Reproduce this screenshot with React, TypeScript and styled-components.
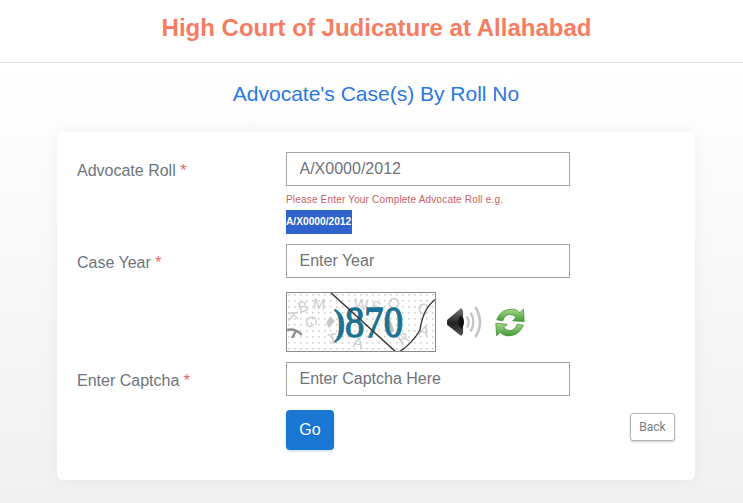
import styled, { createGlobalStyle } from 'styled-components';

const GlobalStyle = createGlobalStyle`
  html, body {
    margin: 0;
    padding: 0;
    height: 100%;
    overflow: hidden;
  }
  body {
    font-family: "Liberation Sans", Arial, sans-serif;
    background: #fff;
  }
`;

const Page = styled.div`
  width: 743px;
  height: 503px;
  overflow: hidden;
  background: linear-gradient(180deg, #ffffff 63px, #f1f1f1 100%);
`;

const Header = styled.header`
  height: 62px;
  padding-left: 10px;
  box-sizing: content-box;
  background: #fff;
  border-bottom: 1px solid #e4e4e4;
  display: flex;
  align-items: center;
  justify-content: center;
`;

const CourtName = styled.h1`
  margin: 0 0 6px;
  font-size: 24px;
  font-weight: 700;
  color: #f67d62;
`;

const PageTitle = styled.h2`
  margin: 0;
  height: 69px;
  padding-left: 9px;
  line-height: 62px;
  text-align: center;
  font-size: 21px;
  font-weight: 400;
  color: #2a78e4;
`;

const Card = styled.main`
  box-sizing: border-box;
  width: 638px;
  height: 348px;
  margin-left: 57px;
  padding: 20px 20px 0;
  background: #fff;
  border-radius: 6px;
  box-shadow: 0 0 20px rgba(0, 0, 0, 0.05);
`;

const Row = styled.div<{ $gap: number }>`
  display: grid;
  grid-template-columns: 209px 284px;
  margin-bottom: ${({ $gap }) => $gap}px;
`;

const Label = styled.label`
  padding-top: 10px;
  font-size: 16px;
  line-height: 18px;
  color: #6c757d;

  span {
    color: #e4606a;
  }
`;

const Input = styled.input`
  box-sizing: border-box;
  display: block;
  width: 284px;
  height: 34px;
  padding: 0 12.5px;
  border: 1px solid #a3a3a3;
  border-radius: 0;
  background: #fff;
  outline: none;
  font-family: inherit;
  font-size: 16px;

  &::placeholder {
    color: #6f7479;
    opacity: 1;
  }
`;

const Hint = styled.div`
  margin-top: 8px;
  font-size: 10px;
  line-height: 12px;
  letter-spacing: 0.18px;
  color: #cc6065;
`;

const RollExample = styled.div`
  width: 66px;
  height: 24px;
  margin-top: 4px;
  background: #2f62cc;
  color: #fff;
  font-size: 10.2px;
  font-weight: 700;
  line-height: 24px;
  white-space: nowrap;
`;

const CaptchaRow = styled.div`
  display: flex;
  align-items: center;
  margin: 0 0 10px 209px;
`;

const CaptchaImage = styled.svg`
  display: block;
  width: 150px;
  height: 60px;
`;

const SoundIcon = styled.svg`
  display: block;
  width: 36px;
  height: 32px;
  margin-left: 10px;
`;

const RefreshIcon = styled.svg`
  display: block;
  width: 32px;
  height: 31px;
  margin-left: 12px;
`;

const Actions = styled.div`
  display: flex;
  align-items: flex-start;
  justify-content: space-between;
  margin-left: 209px;
`;

const GoButton = styled.button`
  width: 48px;
  height: 40px;
  padding: 0;
  border: none;
  border-radius: 4px;
  background: #1976d2;
  color: #fff;
  font-family: inherit;
  font-size: 16px;
  box-shadow: 0 1px 3px rgba(25, 118, 210, 0.3);
`;

const BackButton = styled.button`
  width: 45px;
  height: 28px;
  margin-top: 3px;
  padding: 0;
  border: 1px solid #b5b5b5;
  border-radius: 3px;
  background: #fff;
  color: #757d85;
  font-family: Roboto, sans-serif;
  font-size: 12px;
  box-shadow: 0 1px 2px rgba(0, 0, 0, 0.2);
`;

const noiseLetters = [
  { c: 'B', x: 12, y: 20, r: -15 }, { c: 'M', x: 27, y: 17, r: 5 }, { c: 'K', x: 2, y: 29, r: 85 },
  { c: 'W', x: 68, y: 17, r: 8 }, { c: 'S', x: 85, y: 20, r: 10 }, { c: 'O', x: 102, y: 16, r: 40 },
  { c: 'C', x: 132, y: 22, r: 12 }, { c: 'A', x: 67, y: 56, r: 10 }, { c: 'T', x: 42, y: 52, r: -10 },
  { c: 'R', x: 112, y: 52, r: -30 }, { c: 'A', x: 133, y: 44, r: 15 }, { c: 'G', x: 20, y: 34, r: 70 },
];

const Captcha = () => (
  <CaptchaImage viewBox="0 0 150 60" aria-label="captcha">
    <defs>
      <pattern id="dots" width="6" height="6" patternUnits="userSpaceOnUse">
        <rect x="2" y="2" width="1.6" height="1.6" fill="#cfcfcf" />
      </pattern>
    </defs>
    <rect width="150" height="60" fill="#fff" />
    <rect width="150" height="60" fill="url(#dots)" />
    {noiseLetters.map((l, i) => (
      <text
        key={i}
        x={l.x}
        y={l.y}
        fontFamily="Liberation Sans, sans-serif"
        fontSize="15"
        fill="#cdcdcd"
        transform={`rotate(${l.r} ${l.x + 5} ${l.y - 5})`}
      >
        {l.c}
      </text>
    ))}
    <path d="M1 38 Q9 36 16 43 M10 39 L6 46" stroke="#8d8d8d" strokeWidth="2.4" fill="none" />
    <path d="M44 24 L49 29 L43 36 L40 31Z" fill="#c9c9c9" />
    <path d="M104 27 L108 38 L104 44 L101 37Z" fill="#c0c0c0" />
    <text x="47" y="43" fontFamily="Liberation Serif, serif" fontSize="38" fill="#1d7294" fontWeight="700">
      )
    </text>
    <text
      x="59"
      y="45"
      fontFamily="Liberation Serif, serif"
      fontSize="44"
      fill="#1d7294"
      stroke="#1d7294"
      strokeWidth="1.3"
      textLength="58"
      lengthAdjust="spacingAndGlyphs"
    >
      870
    </text>
    <path d="M44 0 L110 60" stroke="#3d3838" strokeWidth="1.5" fill="none" />
    <path d="M113 60 Q126 52 134 38 Q137 16 150 7" stroke="#3d3838" strokeWidth="1.4" fill="none" />
    <rect x="0.5" y="0.5" width="149" height="59" fill="none" stroke="#8a8a8a" />
  </CaptchaImage>
);

const Sound = () => (
  <SoundIcon viewBox="0 0 38 34" aria-label="listen">
    <defs>
      <linearGradient id="cone" x1="0" y1="0" x2="0" y2="1">
        <stop offset="0" stopColor="#777" />
        <stop offset="0.55" stopColor="#222" />
        <stop offset="1" stopColor="#555" />
      </linearGradient>
    </defs>
    <path d="M1 15 L16 2 L18 5 L18 29 L16 32 L1 20Z" fill="url(#cone)" />
    <ellipse cx="16" cy="17" rx="3" ry="6" fill="#111" />
    <path d="M22 11 Q26 17 22 23" stroke="#c4c4c4" strokeWidth="2.2" fill="none" />
    <path d="M26 7 Q32 17 26 27" stroke="#c4c4c4" strokeWidth="2.4" fill="none" />
    <path d="M31 1 Q41 17 31 33" stroke="#c6c6c6" strokeWidth="2.8" fill="none" />
  </SoundIcon>
);

const Refresh = () => (
  <RefreshIcon viewBox="0 0 36 34" aria-label="refresh captcha">
    <defs>
      <linearGradient id="arrow" x1="0" y1="0" x2="0" y2="1">
        <stop offset="0" stopColor="#a5d88a" />
        <stop offset="1" stopColor="#3f9b33" />
      </linearGradient>
    </defs>
    <path
      d="M3 14 Q8 1 22 2 Q27 3 29 6 L33 2 L34 16 L21 15 L25 11 Q22 8 18 8 Q12 8 10 15Z"
      fill="url(#arrow)"
      stroke="#3a8a30"
      strokeWidth="0.8"
    />
    <path
      d="M33 20 Q28 33 14 32 Q9 31 7 28 L3 32 L2 18 L15 19 L11 23 Q14 26 18 26 Q24 26 26 19Z"
      fill="url(#arrow)"
      stroke="#3a8a30"
      strokeWidth="0.8"
    />
  </RefreshIcon>
);

const App = () => (
  <Page>
    <GlobalStyle />
    <Header>
      <CourtName>High Court of Judicature at Allahabad</CourtName>
    </Header>
    <PageTitle>Advocate's Case(s) By Roll No</PageTitle>
    <Card>
      <Row $gap={10}>
        <Label>Advocate Roll <span>*</span></Label>
        <div>
          <Input placeholder="A/X0000/2012" />
          <Hint>Please Enter Your Complete Advocate Roll e.g.</Hint>
          <RollExample>A/X0000/2012</RollExample>
        </div>
      </Row>
      <Row $gap={14}>
        <Label>Case Year <span>*</span></Label>
        <Input placeholder="Enter Year" />
      </Row>
      <CaptchaRow>
        <Captcha />
        <Sound />
        <Refresh />
      </CaptchaRow>
      <Row $gap={14}>
        <Label>Enter Captcha <span>*</span></Label>
        <Input placeholder="Enter Captcha Here" />
      </Row>
      <Actions>
        <GoButton>Go</GoButton>
        <BackButton>Back</BackButton>
      </Actions>
    </Card>
  </Page>
);

export default App;
